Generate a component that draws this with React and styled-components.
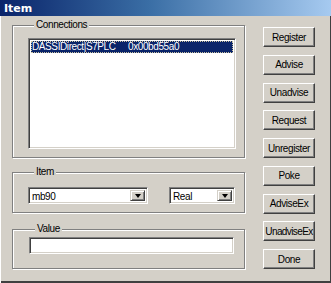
import React from "react";
import styled, { createGlobalStyle } from "styled-components";

const GlobalStyle = createGlobalStyle`
  html, body {
    margin: 0;
    padding: 0;
    background: #d4d0c8;
  }
  body {
    font-family: "Liberation Sans", Arial, sans-serif;
    font-size: 10px;
    letter-spacing: -0.4px;
    color: #000;
  }
`;

const Dialog = styled.div`
  width: 331px;
  height: 283px;
  display: flex;
  flex-direction: column;
  box-sizing: border-box;
  background: #d4d0c8;
`;

const TitleBar = styled.div`
  height: 16px;
  display: flex;
  align-items: center;
  padding-left: 4px;
  background: linear-gradient(90deg, #0a246a 0%, #3a6ea5 45%, #a6caf0 100%);
  color: #fff;
  font-family: Tahoma, "DejaVu Sans", sans-serif;
  font-weight: bold;
  font-size: 11px;
  letter-spacing: 0;
`;

const Body = styled.div`
  flex: 1;
  display: flex;
  gap: 18px;
  padding: 3px 16px 0 12px;
  box-shadow: inset 1px 0 0 #fff, inset -1px -2px 0 #404040;
`;

const LeftCol = styled.div`
  width: 233px;
  display: flex;
  flex-direction: column;
`;

const Group = styled.fieldset`
  margin: ${(p) => p.$mt || 0}px 0 0 0;
  padding: ${(p) => p.$pt}px 0 ${(p) => p.$pb}px ${(p) => p.$pl}px;
  border: 1px solid #808080;
  box-shadow: 1px 1px 0 #fff, inset 1px 1px 0 #fff;
  min-width: 0;
`;

const Legend = styled.legend`
  margin-left: 6px;
  padding: 0 2px;
  height: 12px;
  line-height: 12px;
  background: #d4d0c8;
`;

const Sunken = styled.div`
  box-sizing: border-box;
  background: #fff;
  border: 1px solid;
  border-color: #808080 #fff #fff #808080;
  box-shadow: inset 1px 1px 0 #404040, inset -1px -1px 0 #d4d0c8;
`;

const ListBox = styled(Sunken)`
  width: 208px;
  height: 111px;
  padding: 2px;
`;

const ListRow = styled.div`
  display: flex;
  height: 12px;
  line-height: 12px;
  padding-left: 1px;
  background: ${(p) => (p.$selected ? "#0a246a" : "transparent")};
  color: ${(p) => (p.$selected ? "#fff" : "#000")};
  outline: ${(p) => (p.$selected ? "1px dotted #c8c0a0" : "none")};
  outline-offset: -1px;
  white-space: nowrap;
`;

const Cell = styled.span`
  width: ${(p) => p.$w || "auto"};
  flex: ${(p) => (p.$w ? "none" : 1)};
`;

const Combo = styled(Sunken)`
  width: ${(p) => p.$w}px;
  height: 17px;
  display: flex;
  align-items: stretch;
  padding: 2px;
`;

const ComboText = styled.div`
  flex: 1;
  line-height: 13px;
  padding-left: 1px;
`;

const DropButton = styled.div`
  width: 15px;
  box-sizing: border-box;
  display: flex;
  align-items: center;
  justify-content: center;
  background: #d4d0c8;
  border: 1px solid;
  border-color: #d4d0c8 #404040 #404040 #d4d0c8;
  box-shadow: inset 1px 1px 0 #fff, inset -1px -1px 0 #808080;
`;

const Arrow = styled.div`
  width: 0;
  height: 0;
  border-left: 3.5px solid transparent;
  border-right: 3.5px solid transparent;
  border-top: 4px solid #000;
  margin-top: 1px;
`;

const ItemRow = styled.div`
  display: flex;
  gap: 21px;
`;

const EditBox = styled(Sunken)`
  width: 205px;
  height: 17px;
`;

const ButtonCol = styled.div`
  display: flex;
  flex-direction: column;
  gap: 7.75px;
  padding-top: 8px;
`;

const Button = styled.button`
  width: 52px;
  height: 20px;
  padding: 0;
  box-sizing: border-box;
  background: #d4d0c8;
  border: 1px solid;
  border-color: #fff #404040 #404040 #fff;
  box-shadow: inset -1px -1px 0 #808080;
  font-family: "Liberation Sans", Arial, sans-serif;
  font-size: 10px;
  letter-spacing: ${(p) => (p.$tight ? "-0.6px" : "-0.4px")};
  color: #000;
  white-space: nowrap;
  display: flex;
  align-items: center;
  justify-content: center;
`;

const buttons = [
  "Register",
  "Advise",
  "Unadvise",
  "Request",
  "Unregister",
  "Poke",
  "AdviseEx",
  "UnadviseEx",
  "Done",
];

export default function App() {
  return (
    <>
      <GlobalStyle />
      <Dialog>
        <TitleBar>Item</TitleBar>
        <Body>
          <LeftCol>
            <Group $pt={7} $pb={8} $pl={15}>
              <Legend>Connections</Legend>
              <ListBox>
                <ListRow $selected>
                  <Cell $w="96px">DASSIDirect|S7PLC</Cell>
                  <Cell>0x00bd55a0</Cell>
                </ListRow>
              </ListBox>
            </Group>
            <Group $mt={8} $pt={9} $pb={8} $pl={15}>
              <Legend>Item</Legend>
              <ItemRow>
                <Combo $w={120}>
                  <ComboText>mb90</ComboText>
                  <DropButton>
                    <Arrow />
                  </DropButton>
                </Combo>
                <Combo $w={66}>
                  <ComboText>Real</ComboText>
                  <DropButton>
                    <Arrow />
                  </DropButton>
                </Combo>
              </ItemRow>
            </Group>
            <Group $mt={10} $pt={2} $pb={14} $pl={16}>
              <Legend>Value</Legend>
              <EditBox />
            </Group>
          </LeftCol>
          <ButtonCol>
            {buttons.map((b) => (
              <Button key={b} $tight={b === "UnadviseEx"}>
                {b}
              </Button>
            ))}
          </ButtonCol>
        </Body>
      </Dialog>
    </>
  );
}
